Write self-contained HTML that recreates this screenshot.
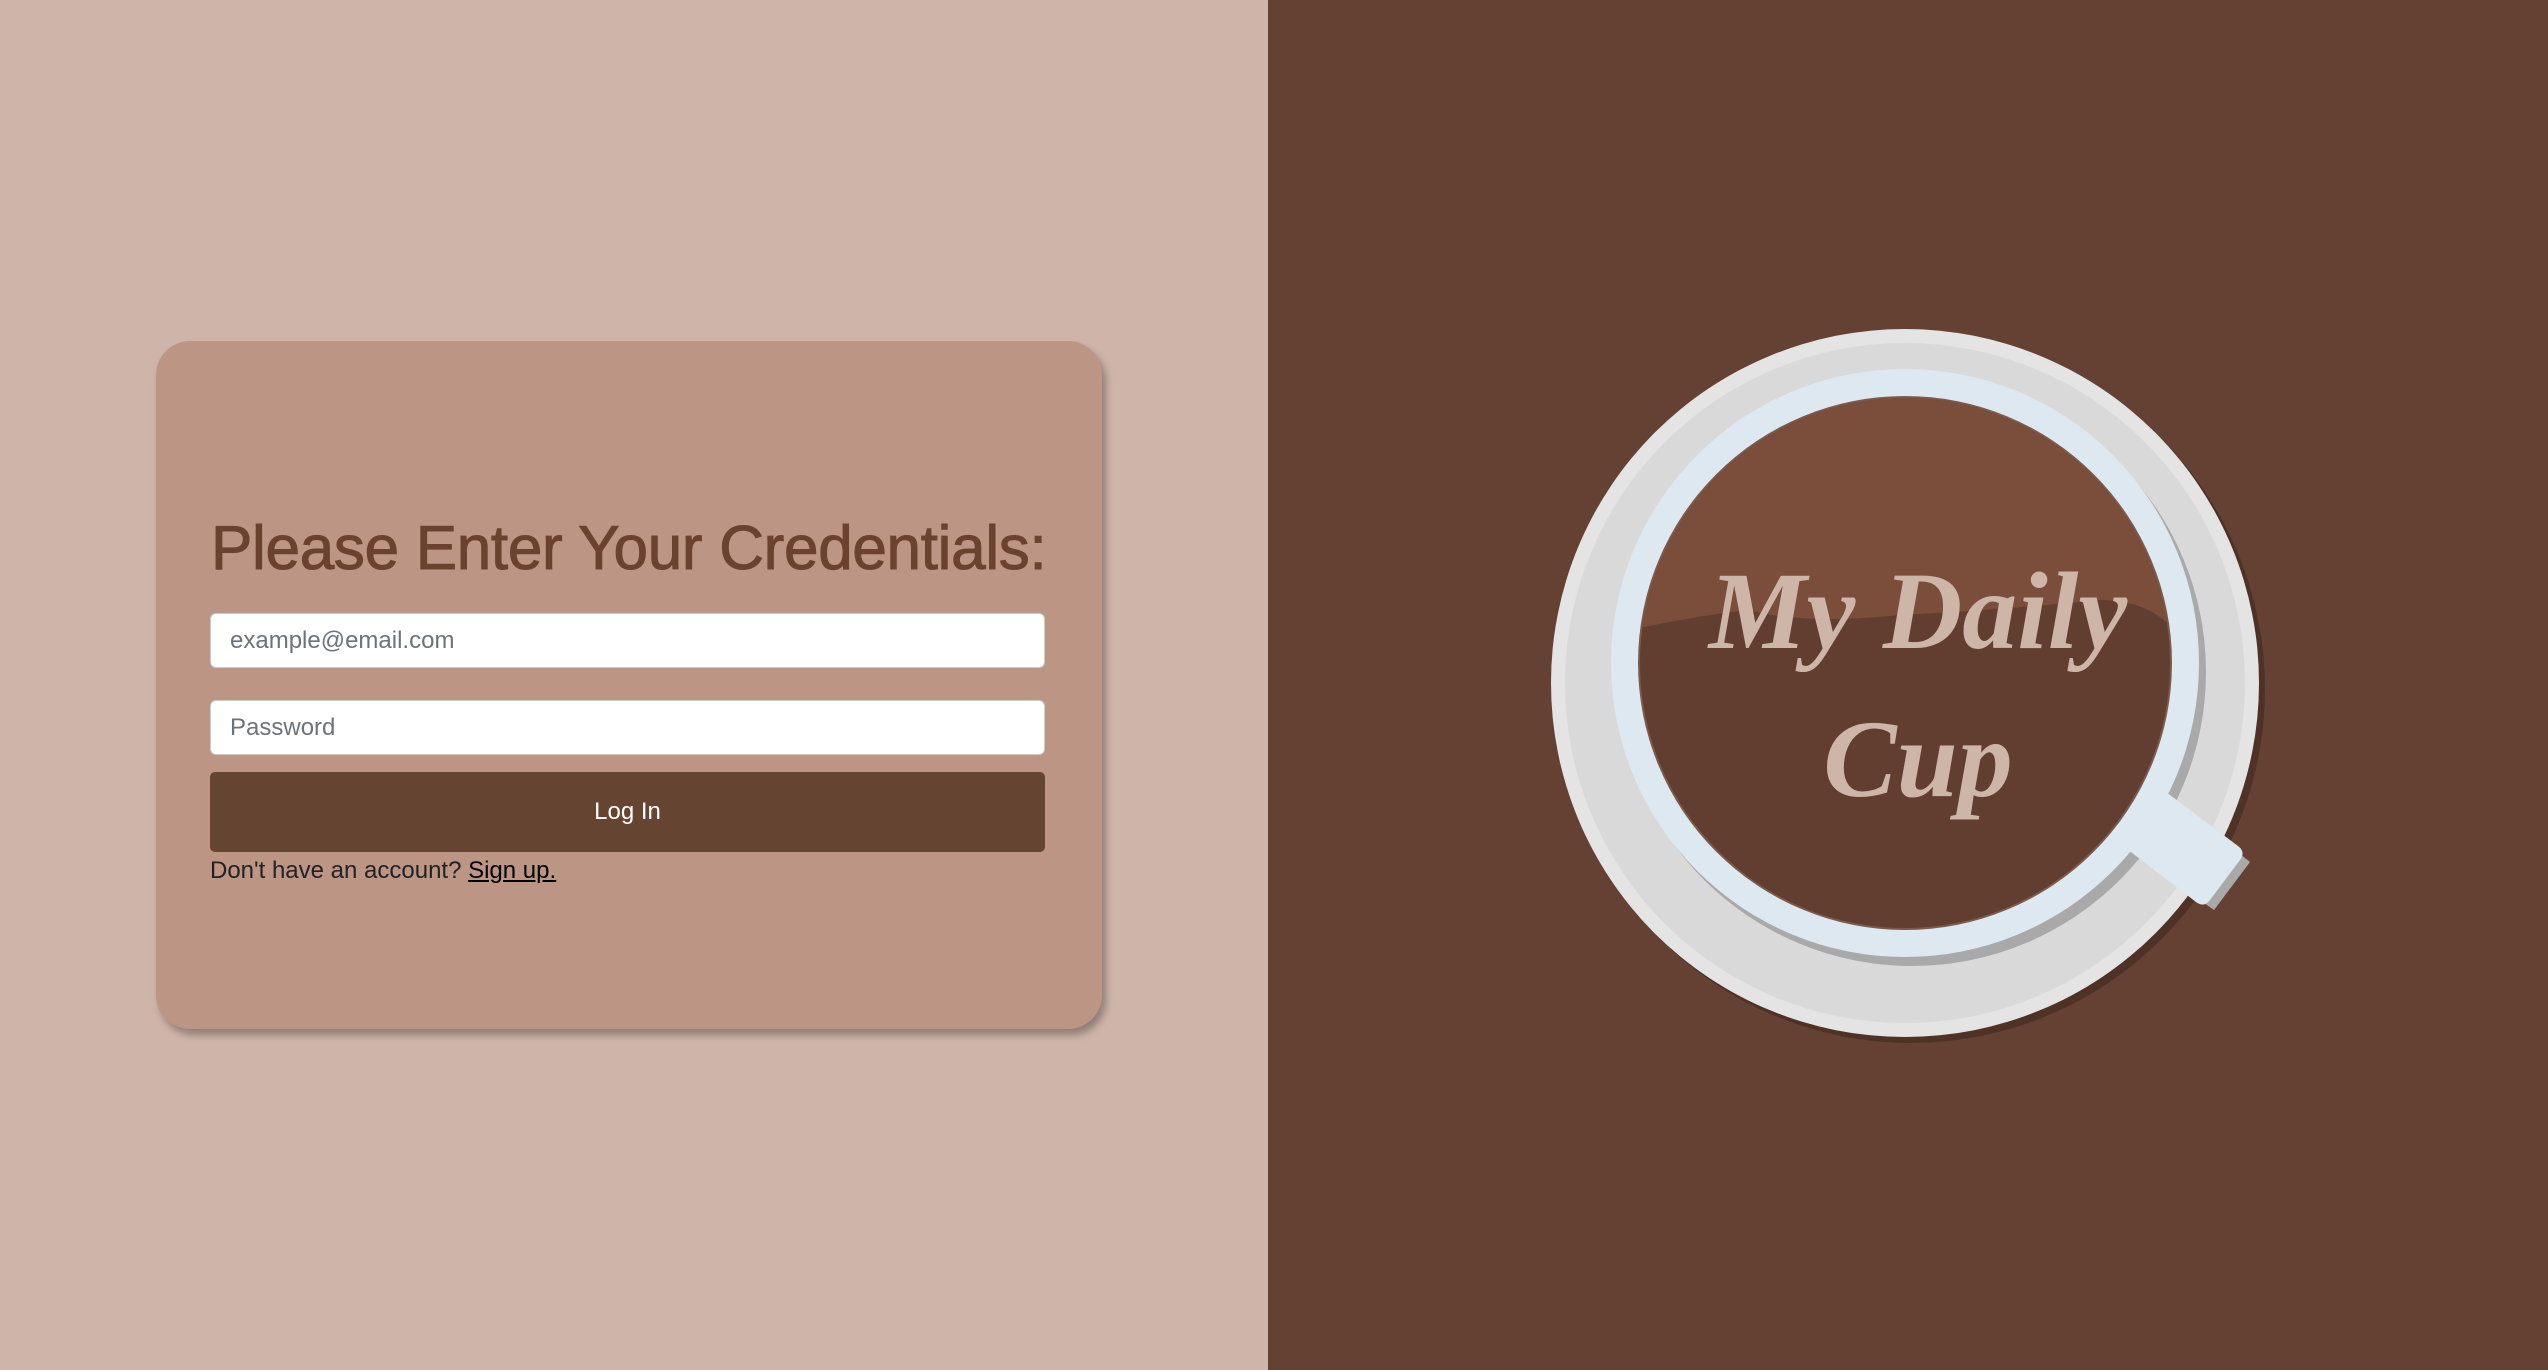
<!DOCTYPE html>
<html><head><meta charset="utf-8"><style>
html,body{margin:0;padding:0;width:2548px;height:1370px;overflow:hidden;font-family:"Liberation Sans",sans-serif}
.left{position:absolute;left:0;top:0;width:1268px;height:1370px;background:#cfb5a9}
.right{position:absolute;left:1268px;top:0;width:1280px;height:1370px;background:#654134}
.card{position:absolute;left:156px;top:341px;width:946px;height:688px;background:#bd9585;border-radius:34px;box-shadow:4px 6px 8px rgba(0,0,0,.3)}
h1{position:absolute;left:211px;top:513px;margin:0;font-size:62px;font-weight:normal;color:#6b4230;letter-spacing:-0.3px;white-space:nowrap;-webkit-text-stroke:1px #6b4230}
.inp{position:absolute;left:210px;width:835px;height:55px;background:#fff;border:1px solid #ccc;border-radius:6px;box-sizing:border-box;font-size:24px;color:#6c737a;padding-left:19px;line-height:53px}
.btn{position:absolute;left:210px;top:772px;width:835px;height:80px;background:#654432;border-radius:5px;color:#fff;font-size:24px;text-align:center;line-height:80px}
.txt{position:absolute;left:210px;top:855px;font-size:24px;color:#222;line-height:32px}
.txt u{color:#000}
</style></head><body>
<div class="left"></div>
<div class="right"></div>
<div class="card"></div>
<h1>Please Enter Your Credentials:</h1>
<div class="inp" style="top:613px">example@email.com</div>
<div class="inp" style="top:700px">Password</div>
<div class="btn">Log In</div>
<div class="txt">Don't have an account? <u>Sign up.</u></div>
<svg style="position:absolute;left:0;top:0" width="2548" height="1370" viewBox="0 0 2548 1370">
<defs><clipPath id="cf"><circle cx="1905" cy="663" r="265"/></clipPath></defs>
<circle cx="1911" cy="689" r="354" fill="#4e3226"/>
<circle cx="1905" cy="683" r="354" fill="#e4e4e4"/>
<circle cx="1905" cy="683" r="340" fill="#d9d9d9"/>
<circle cx="1912" cy="672" r="294" fill="#a9a9a9"/>
<polygon points="2157,787 2250,862 2214,910 2115,840" fill="#a9a9a9"/>
<circle cx="1905" cy="663" r="294" fill="#dee8f0"/>
<path d="M2150,780 L2238,846 Q2246,852 2240,860 L2210,900 Q2204,908 2196,902 L2110,836 Z" fill="#dee8f0"/>
<circle cx="1905" cy="663" r="267" fill="#7a5a4c"/>
<g clip-path="url(#cf)">
<rect x="1630" y="390" width="560" height="560" fill="#623e30"/>
<path d="M1630,390 H2190 V655 Q2165,600 2100,600 Q2000,610 1900,615 Q1800,625 1750,610 Q1700,615 1630,630 Z" fill="#7a4e3a"/>
</g>
<g font-family="'Liberation Serif',serif" font-style="italic" font-weight="bold" fill="#cdb5a8" text-anchor="middle">
<text x="1918" y="648" font-size="110">My Daily</text>
<text x="1918" y="796" font-size="110">Cup</text>
</g>
</svg>
</body></html>
